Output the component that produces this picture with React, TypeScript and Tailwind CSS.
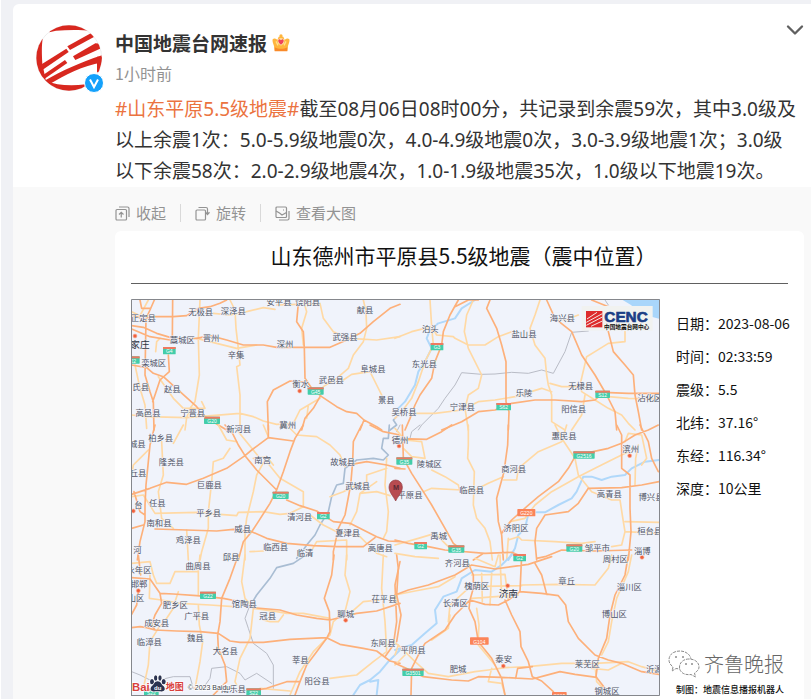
import React from 'react';
import { ChevronDown } from 'lucide-react';

type Label = [string, number, number];
type Shield = [string, number, number, number];

interface Tile {
  x: number;
  y: number;
  minor: string;
  major: string;
  river?: string;
  canal?: string;
  border?: string;
  labels: Label[];
  shields: Shield[];
  cities: [number, number][];
}

// The map is drawn in six tiles, three map units per pixel
const TILES: Tile[] = [
  {
    x: -3,
    y: -12,
    minor:
      'M5 50L30 62L55 15M210 15L205 130L208 240L195 320L180 340L170 368L165 405M300 15L315 45L318 100L325 160L330 210L320 215L330 300L330 405M200 130L260 145L320 160L380 150M250 55L300 60L350 50L400 38L435 43M440 30L500 28L570 25L580 70L610 110L660 130L740 135L810 125M520 150L515 100L530 50L520 15M700 15L708 50L710 100L700 140L670 180L655 220L620 250L580 275M640 255L665 238L720 230L740 270L760 310M5 360L50 365L170 368L330 355L370 365L400 378L440 388L490 385L510 345L570 310M535 330L530 370M15 210L30 280L45 330L50 400M85 245L130 310L160 340L225 340L215 320M77 170L80 140L90 130',
    major:
      'M5 60L40 72L70 65L130 65L170 62L205 40L240 35L270 25L290 15M73 15L60 45L48 70L45 240L60 290L70 320L72 405M30 15L35 40L60 40M128 15L127 130M5 92L40 97L80 115L130 130L200 130L240 122L290 135L340 150L400 150L440 157L600 157L650 135L690 115L730 80L780 40L810 28M5 102L60 125L120 135M505 25L500 80L520 110L523 160L525 250L545 280L575 305L620 335L650 350L680 355L702 375L740 395L755 405M5 210L50 218L70 235L100 245L150 290L200 335L225 365L265 390L290 405M115 180L118 230L90 255L75 300L68 320M520 262L480 258L430 285L412 320L415 405M570 305L550 340L525 370L515 405M702 375L690 405',
    canal: 'M805 360L790 375L800 390L780 405',
    labels: [
      ['安平县', 447, 20], ['饶阳县', 533, 20], ['无极县', 212, 50], ['深泽县', 310, 48], ['献县', 705, 44],
      ['正定县', 40, 68], ['藁城区', 157, 136], ['晋州', 243, 129], ['深州', 465, 147], ['武强县', 645, 126],
      ['辛集', 318, 180], ['栾城区', 71, 203], ['阜城县', 729, 222], ['武邑县', 604, 255], ['衡水', 512, 268],
      ['氏县', 32, 276], ['赵县', 127, 281], ['景县', 769, 314], ['高邑县', 54, 355], ['宁晋县', 188, 353],
      ['吴桥县', 822, 350], ['冀州', 473, 391], ['新河县', 326, 403], ['家庄', 30, 150],
    ],
    shields: [['G4', 118, 167, 38], ['22', 10, 195, 38], ['G45', 557, 288, 48], ['G20', 246, 376, 48]],
    cities: [[15, 123], [509, 288]],
  },
  {
    x: 792,
    y: -12,
    minor:
      'M0 130L50 110L110 95L125 120L175 125L180 130L220 150L270 150L310 125L350 110M235 15L215 60L208 110L220 160L260 240L250 280L220 300L210 340L220 405M435 15L420 60L405 100L420 150L450 190L455 240L460 270L470 300L470 380L510 405M480 70L510 75L550 60M465 265L500 275L570 275M60 355L120 355L200 345L250 320L300 315L360 305L440 280L470 290M690 110L690 140L640 145L600 170L575 185L555 270L560 290L600 315L640 340L680 360L700 385L720 405M530 405L560 360L570 300M640 305L700 310L792 312M105 15L110 95L115 150L90 200L70 260L50 310L20 350L0 370',
    major:
      'M190 15L165 60L145 110L140 150L120 200L110 250L75 300L60 330L45 370L30 405M180 35L220 15L250 15M285 15L275 40L305 100L320 150L333 200L333 320L342 350L340 405M455 15L480 70L530 110L560 180L600 240L635 300L660 350L665 405M590 15L640 35M640 110L655 170L690 210L715 240L720 300L730 350L740 405M140 405L200 380L250 350L300 345L350 325L420 315L480 315L560 320L600 315L625 292L700 295L792 295',
    river: 'M240 15L200 40L180 70L130 85L105 105L95 130L110 160L90 200L70 230L60 270L30 320L0 350',
    border: 'M580 108L530 112L510 170L475 235L440 225L400 235L350 232L300 237L260 238L200 233L180 270L150 310L130 340L80 390L70 405M630 15L640 30',
    labels: [
      ['泊头', 106, 103], ['盐山县', 387, 117], ['海兴县', 502, 70], ['东光县', 88, 208], ['无棣县', 557, 272],
      ['乐陵', 387, 295], ['宁津县', 202, 337], ['阳信县', 536, 343], ['沾化区', 764, 310],
    ],
    shields: [['G3', 126, 155, 38], ['S12', 623, 298, 44], ['S62', 326, 335, 44]],
    cities: [],
  },
  {
    x: -3,
    y: 378,
    minor:
      'M5 150L10 120L30 100L55 75M95 50L100 150L85 200L95 280L130 310M5 215L40 210L75 265L200 262L270 268L320 272L325 262L400 260L450 268L480 265L520 245L520 200L450 160L410 110M130 55L160 0M265 0L290 45L320 50M325 20L390 100M300 70L280 100L250 110L245 170L235 260L235 310L215 380L210 405M470 0L500 30L560 35L600 60L630 90L645 125M400 0L415 35M370 100L410 95L430 120M410 95L380 150L370 200L350 280L345 320L345 405M540 270L580 300L620 320L690 335L715 360M600 215L640 200L690 175L710 175L710 150L770 130M770 100L765 180L775 260L770 320L760 340M740 170L690 205L680 260L660 300M690 205L740 200L780 212M170 315L175 405M360 380L400 378M540 385L560 350L650 345L650 405M730 370L740 385L770 395',
    major:
      'M75 0L60 60L55 110L48 180L45 240L45 290L30 350L22 405M5 208L60 190L110 172L170 178L220 160L290 130L345 92L365 75L415 38L415 0M415 38L490 48M285 0L305 20L325 60L345 92L380 135L410 165L440 195M520 0L495 40L480 80L460 140L440 195L420 235L385 290L365 320L340 350L325 405M470 225L510 242L560 258L610 290L660 295L700 315L740 335L775 348L810 350M75 312L170 315L260 318L310 313L365 320L410 340L470 355L550 362L620 365L700 365L735 338M695 0L670 50L668 110L662 180L645 270L625 310L610 380L610 405M665 118L710 110L770 120L810 130M720 0L760 20L810 30M5 310L40 300M12 200L30 260L45 270',
    canal:
      'M778 0L775 40L760 40L755 70L775 90L760 105L730 100L680 105L645 130L640 175L620 180L605 215L595 260L570 300L555 330L530 360L520 375L500 400',
    labels: [
      ['柏乡县', 92, 38], ['城县', 22, 58], ['隆尧县', 124, 110], ['南宫', 398, 105], ['故城县', 638, 111],
      ['丘县', 24, 143], ['巨鹿县', 238, 179], ['武城县', 683, 183], ['任县', 82, 233], ['台', 25, 239],
      ['平乡县', 236, 263], ['清河县', 509, 275], ['南和县', 87, 294], ['威县', 338, 311], ['夏津县', 653, 323],
      ['鸡泽县', 175, 345], ['临西县', 437, 366], ['临清', 525, 384], ['高唐县', 751, 368], ['河', 22, 376],
      ['邱县', 303, 396],
    ],
    shields: [['G20', 452, 211, 48], ['G2', 580, 272, 38]],
    cities: [[10, 258]],
  },
  {
    x: 792,
    y: 378,
    minor:
      'M220 0L220 60L218 100L238 140L235 240L245 280L270 310L285 350L292 405M0 10L30 45L80 50L90 100L50 95L25 70M110 135L150 155L190 180L195 200M85 200L110 190L200 195L240 195L280 175L325 155M325 165L365 165L370 130L430 80L500 50L515 0M480 0L500 40L540 100L550 150L590 200M700 80L660 100L600 130L550 155L470 200L420 240L390 280L345 290L320 325M690 50L700 25L740 30L755 100L740 120M590 200L650 225L675 225L685 290L690 320L792 325M690 290L792 292M340 345L370 335L380 345L480 350L560 355L600 350M0 360L70 340L120 325L165 370M0 385L60 395L130 400M340 340L335 405M690 320L680 360L650 365M720 180L722 100L730 60',
    major:
      'M0 40L95 43L140 20L170 0M22 0L25 100L50 145L85 200L110 240L150 310L175 355L205 378M340 0L338 60L327 140L305 220L310 290L320 330L325 405M0 130L30 132M0 345L40 355L100 365L150 375L270 385L350 382L370 390M570 85L640 70L680 55L720 30L760 15L790 0M540 95L520 130L490 170L430 215L395 245L350 285L320 325M665 0L680 30L680 130L705 150L705 250L708 320L700 405M735 0L760 50L770 100L790 140M792 170L740 180L680 188L580 190L550 235L520 260L450 270L425 310L420 350L425 405M425 400L450 395L500 375L600 378L710 375M235 405L265 385',
    river:
      'M792 105L750 110L710 130L690 150L650 155L620 165L590 155L565 155L545 200L530 220L490 240L450 262L425 262M398 275L390 310L370 330L360 370L340 405',
    border: 'M75 0L50 20L45 40M15 0L5 20',
    labels: [
      ['惠民县', 507, 34], ['德州', 15, 45], ['滨州', 707, 73], ['陵城区', 103, 117], ['商河县', 356, 131],
      ['临邑县', 230, 196], ['高青县', 643, 207], ['博兴县', 768, 215], ['平原县', 45, 210], ['济阳区', 363, 309],
      ['桓台县', 764, 319], ['禹城', 131, 333], ['邹平市', 607, 370], ['淄博', 742, 377], ['周村区', 661, 401],
      ['齐河县', 187, 413],
    ],
    shields: [
      ['G35', 28, 108, 48], ['G2516', 567, 90, 64], ['G220', 394, 263, 54], ['G2', 77, 362, 38],
      ['G35', 184, 372, 48], ['G2', 374, 398, 38], ['G20', 538, 369, 48],
    ],
    cities: [[12, 63], [704, 92], [741, 397]],
  },
  {
    x: -3,
    y: 768,
    minor:
      'M60 60L58 130L95 135L150 145L240 150L310 155M70 60L80 85L120 85L135 50L205 50L210 0M205 50L205 120M145 110L135 140M205 150L208 210L218 260L210 320L195 400M140 145L110 190L85 220L60 260L55 330L40 400M345 0L335 80L345 130L370 160L360 250L330 310L315 380L320 390M370 160L440 170L470 175L520 175L600 190M400 195L420 200L445 200L460 180M650 0L645 60L660 110L645 170L610 200L600 240L550 290L510 350L480 420M760 0L755 100L765 200L770 290L730 320L680 360L640 365L600 370M660 175L700 140L750 135M390 400L480 408M5 25L60 20L70 60',
    major:
      'M25 0L32 60M5 68L60 72L90 115L130 117L200 122L280 130L320 138M370 158L450 165L500 180L560 190L600 195L680 175L740 168L810 145M90 115L95 145L75 180L65 210L75 225L140 228L210 230L265 235L300 258L330 262L400 262L480 253L590 248L630 268L700 280L740 288L780 318L810 325M325 0L300 70L275 130L270 200L263 240L265 280L285 330L290 380L270 400L250 420M5 218L30 215L50 218L75 225M612 0L605 60L583 130L598 170L600 230L590 250L560 290L530 330L510 380L495 420M380 405L410 400L470 380L510 380M765 305L790 270L800 200L795 90L810 20M25 110L20 150L5 178',
    canal: 'M520 5L490 25L440 38L420 70L380 120L365 145',
    river: 'M810 285L775 320L750 350L720 375L690 390L670 420M740 420L745 375L720 380',
    border:
      'M5 350L30 360L60 375M100 372L130 365L180 365L190 400M215 405L240 370L245 340L290 335L330 355L345 375L380 355L425 385M430 400V330L410 295L370 265L355 220L345 190L360 150',
    labels: [
      ['曲周县', 204, 33], ['永年区', 27, 45], ['邯郸', 27, 87], ['茌平县', 762, 131], ['山区', 18, 130],
      ['肥乡区', 136, 149], ['馆陶县', 343, 148], ['广平县', 200, 183], ['冠县', 413, 183], ['聊城', 647, 177],
      ['成安县', 80, 205], ['魏县', 196, 248], ['临漳县', 58, 262], ['东阿县', 759, 263], ['大名县', 286, 289],
      ['莘县', 511, 316], ['阳谷县', 561, 379], ['南乐县', 310, 403],
    ],
    shields: [['G22', 234, 121, 48], ['S22', 64, 412, 44], ['S22', 371, 411, 44]],
    cities: [[25, 107], [647, 196]],
  },
  {
    x: 792,
    y: 768,
    minor:
      'M0 120L60 108L130 95L180 65M230 60L330 58L340 135M235 95L380 92M260 55L262 140M290 55L285 150M380 90L490 88L600 90L640 40L650 0M230 130L370 120M240 10L300 35L310 0M165 180L160 220L110 255M10 270L60 320L100 355L160 365L240 350L280 345L330 338L400 335L500 325L600 325L700 320L740 335L792 350M0 265L10 270L0 300M220 100L165 150L160 200M245 160L252 210L250 250M250 270L300 330M290 340L280 380L320 385L330 420M710 0L700 50L665 130L650 200L640 260L620 300M600 330L605 380L625 400M590 340L640 345L680 325M315 0L320 130M30 300L0 330',
    major:
      'M0 120L40 105L100 90L180 60L230 30L300 42L400 28L470 5M220 25L235 60L235 100L225 135L222 160L240 200L250 260L290 310L320 370L330 420M225 135L270 148L310 150L340 135L375 110L380 0M375 110L440 115L490 122L512 150L520 200L550 250L600 300L640 315L680 325L740 350L792 358M330 135L350 180L375 230L378 275L400 320L412 365L440 378L475 410M420 25L440 60L455 118M700 0L690 60L660 120L645 180L635 250L610 310L603 365L630 400M0 325L45 345L85 365L170 375L220 378L250 365L320 367L412 372L450 362L495 350L540 358L605 367M48 420L50 340L70 300L90 265L150 225L180 180L225 135M5 0L10 40L5 120L18 180L5 260M362 370L368 340L412 335',
    river: 'M350 0L320 30L290 50L240 45L200 70L185 110L145 125L120 165L125 205L90 235L50 270L0 285',
    labels: [
      ['槐荫区', 245, 93], ['济南', 340, 118], ['长清区', 181, 145], ['章丘', 515, 79], ['淄川区', 703, 97],
      ['博山区', 658, 176], ['平阴县', 54, 286], ['泰安', 326, 313], ['肥城', 189, 343], ['莱芜区', 577, 326],
      ['沂源', 778, 342], ['钢城区', 636, 408],
    ],
    shields: [['G104', 253, 258, 56], ['G3501', 54, 352, 64], ['G205', 493, 422, 44]],
    cities: [[338, 92], [325, 333]],
  },
];

// City names set a step larger than the counties
const LARGE = ['家庄', '济南'];
const NATIONAL = ['G220', 'G104', 'G205'];

const DETAILS = [
  { label: '日期：', value: '2023-08-06' },
  { label: '时间：', value: '02:33:59' },
  { label: '震级：', value: '5.5' },
  { label: '北纬：', value: '37.16°' },
  { label: '东经：', value: '116.34°' },
  { label: '深度：', value: '10公里' },
];

const MapTile: React.FC<{ tile: Tile }> = ({ tile }) => (
  <g transform={`translate(${tile.x} ${tile.y})`}>
    <g fill="none" strokeLinejoin="round" strokeLinecap="round">
      {tile.border && <path d={tile.border} stroke="#b9bcc6" strokeWidth="3" />}
      {tile.canal && <path d={tile.canal} stroke="#a9bdd3" strokeWidth="5" />}
      {tile.river && <path d={tile.river} stroke="#b0d8fa" strokeWidth="6" />}
      <path d={tile.minor} stroke="#ffd9a4" strokeWidth="5" />
      <path d={tile.major} stroke="#fdb07a" strokeWidth="5" />
    </g>
  </g>
);

const TileText: React.FC<{ tile: Tile }> = ({ tile }) => (
  <g transform={`translate(${tile.x} ${tile.y})`} textAnchor="middle">
    {tile.cities.map(([cx, cy]) => (
      <circle key={cx} cx={cx} cy={cy} r="6" fill="#f0603c" stroke="#f8b7a2" strokeWidth="2" />
    ))}
    {tile.shields.map(([name, cx, cy, w]) => (
      <g key={name + cx}>
        <rect x={cx - w / 2} y={cy - 11} width={w} height="22" rx="2" fill={NATIONAL.includes(name) ? '#fb8459' : '#43cda9'} />
        {!NATIONAL.includes(name) && <rect x={cx - w / 2} y={cy - 11} width={w} height="6" fill="#ee7a61" />}
        <text x={cx} y={cy + 8} fontSize="15" fill="#ffffff">{name}</text>
      </g>
    ))}
    {tile.labels.map(([name, cx, cy]) => (
      <text
        key={name}
        x={cx}
        y={cy + 9}
        fontSize={LARGE.includes(name) ? 29 : 25}
        fill={LARGE.includes(name) ? '#2f3340' : '#505566'}
        stroke="#f0f3fb"
        strokeWidth="3"
        paintOrder="stroke"
      >
        {name}
      </text>
    ))}
  </g>
);

const EpicenterMap: React.FC = () => (
  <svg
    viewBox="0 0 1587 1191"
    role="img"
    aria-label="震中位置"
    className="block h-auto w-full font-['Liberation_Sans','Noto_Sans_CJK_SC',sans-serif]"
  >
    <rect width="1587" height="1191" fill="#f0f3fb" />
    <path d="M1470 0L1500 18L1530 45L1587 60V0Z" fill="#a9d6fb" />
    {TILES.map((tile, i) => <MapTile key={i} tile={tile} />)}
    {TILES.map((tile, i) => <TileText key={i} tile={tile} />)}

    {/* Epicentre pin */}
    <path d="M794 606C786 590 774 580 774 564A20 21 0 0 1 814 564C814 580 802 590 794 606Z" fill="#b84b50" stroke="#8f3a40" strokeWidth="2" />
    <text x="795" y="573" fontSize="22" fontWeight="bold" textAnchor="middle" fill="#5a2a35">M</text>

    {/* CENC badge */}
    <rect x="1352" y="21" width="213" height="74" fill="#f1f2f0" />
    <rect x="1365" y="36" width="49" height="49" fill="#dd2b2b" />
    <path d="M1368 60L1398 40M1366 70L1414 44M1366 79L1414 54M1380 82L1414 66" stroke="#f6e9e6" strokeWidth="3" />
    <text x="1420" y="68" fontSize="46" fontWeight="bold" fill="#1c3f86" stroke="#1c3f86" strokeWidth="2">CENC</text>
    <text x="1419" y="89" fontSize="17" fontWeight="bold" fill="#111111">中国地震台网中心</text>

    {/* Map provider */}
    <g stroke="#ffffff" strokeWidth="4" paintOrder="stroke">
      <text x="3" y="1175" fontSize="34" fontWeight="bold" fill="#d8403c">Bai</text>
      <g fill="#2b3350">
        <ellipse cx="63" cy="1148" rx="6" ry="8" />
        <ellipse cx="74" cy="1137" rx="5" ry="8" />
        <ellipse cx="87" cy="1137" rx="5" ry="8" />
        <ellipse cx="98" cy="1148" rx="6" ry="8" />
        <path d="M80 1147C90 1147 90 1156 98 1162C106 1172 98 1180 88 1177L72 1177C62 1180 54 1172 62 1162C70 1156 70 1147 80 1147Z" />
      </g>
      <text x="80" y="1174" fontSize="18" fontWeight="bold" textAnchor="middle" fill="#ffffff" stroke="none">du</text>
      <text x="104" y="1174" fontSize="27" fontWeight="bold" fill="#d8403c">地图</text>
      <text x="170" y="1172" fontSize="21" fill="#3c3f4a">© 2023 Baidu</text>
    </g>
    <path d="M1.500 1191V1.500H1585.500V1189.500H1.500" fill="none" stroke="#85878c" strokeWidth="3" />
  </svg>
);

const Avatar: React.FC = () => (
  <div className="relative h-[66px] w-[66px] shrink-0">
    <svg viewBox="0 0 198 198" className="h-full w-full" aria-hidden="true">
      <defs>
        <clipPath id="avatar-clip">
          <circle cx="99" cy="99" r="98" />
        </clipPath>
      </defs>
      <circle cx="99" cy="99" r="98" fill="#ffffff" stroke="#e6e6e6" strokeWidth="2" />
      <g clipPath="url(#avatar-clip)" fill="#d8281f">
        {/* Rim */}
        <path d="M40 22L60 17C95 14 130 14 172 17L165 -5H40Z" />
        <path d="M-5 40L20 42C17 60 17 82 19 116L30 168L0 175Z" />
        <path d="M30 168C60 180 100 184 150 178L165 200H15Z" />
        <path d="M183 95H200V142H183Z" />
        {/* Bars */}
        <path d="M18 117L91 71L98 81L19 135Z" />
        <path d="M18 152L87 105L94 114L28 160Z" />
        <path d="M94 64L167 23L175 35L102 75Z" />
        <path d="M111 94L178 55L195 56L192 71L118 105Z" />
        <path d="M28 166C80 136 130 113 200 90V112C140 122 90 148 40 178Z" />
      </g>
    </svg>
    <svg viewBox="0 0 20 20" className="absolute -right-[2px] -bottom-[2px] h-5 w-5" aria-hidden="true">
      <circle cx="10" cy="10" r="9.500" fill="#14a1fb" stroke="#ffffff" />
      <path d="M6 6.500L10 14L14 6.500" fill="none" stroke="#ffffff" strokeWidth="2" />
    </svg>
  </div>
);

const Crown: React.FC = () => (
  <svg viewBox="0 0 54 54" className="h-[18px] w-[18px]" aria-hidden="true">
    <path d="M2 16C6 12 12 14 16 18L20 8H34L38 18C42 14 48 12 52 16C54 22 50 30 48 36L46 50H8L6 36C4 30 0 22 2 16Z" fill="#ffb53d" />
    <path d="M8 40C20 46 34 46 46 40V52H8Z" fill="#f98a2a" />
    <circle cx="27" cy="6" r="5" fill="#ffb53d" />
    <path d="M12 22L18 34M42 22L36 34" stroke="#ffe08a" strokeWidth="4" />
    <path d="M16 16L27 12L38 16L36 28L27 35L18 28Z" fill="#ffe0a0" />
    <path d="M27 32C17 26 17 16 23 16L27 19L31 16C37 16 37 26 27 32Z" fill="#f0435b" />
  </svg>
);

const iconClass = 'h-[15px] w-[15px]';

const CollapseIcon = () => (
  <svg viewBox="0 0 15 15" className={iconClass} fill="none" stroke="currentColor" strokeWidth="1.200" aria-hidden="true">
    <rect x="1" y="3.500" width="10.500" height="10.500" rx="1" />
    <path d="M4 1H12.500Q14 1 14 2.500V11M6.250 11.500V6.500M4 8.500L6.250 6.250L8.500 8.500" />
  </svg>
);

const RotateIcon = () => (
  <svg viewBox="0 0 15 15" className={iconClass} fill="none" stroke="currentColor" strokeWidth="1.200" aria-hidden="true">
    <rect x="1" y="4" width="9.500" height="10" rx="1" />
    <path d="M3.500 1.500H11Q12.500 1.500 12.500 3V8M10.500 6.250L12.500 8.500L14.500 6.250" />
  </svg>
);

const ViewIcon = () => (
  <svg viewBox="0 0 15 15" className={iconClass} fill="none" stroke="currentColor" strokeWidth="1.200" aria-hidden="true">
    <rect x="1" y="1" width="10.500" height="10.500" rx="1" />
    <path d="M1 5L4.500 7L7 9L11.500 6.500M8 4H9M4 14H12.500Q14 14 14 12.500V5" />
  </svg>
);

const ACTIONS = [
  { name: '收起', Icon: CollapseIcon },
  { name: '旋转', Icon: RotateIcon },
  { name: '查看大图', Icon: ViewIcon },
];

const WechatMark = () => (
  <svg viewBox="0 0 32 28" className="h-7 w-8" fill="#ffffff" stroke="#8b8b8b" strokeWidth="1" strokeDasharray="3 1" aria-hidden="true">
    <path d="M12 1C5 1 1 5 1 10C1 13 3 15.500 5 17L4 21L8 18.500C16 20 23 16 23 10C23 5 18 1 12 1Z" />
    <path d="M21 9C15 9 11.500 13 11.500 17C11.500 22 16 25.500 23 24.500L27.500 27L26.500 23C29 21.500 31 19.500 31 17C31 12.500 27 9 21 9Z" />
    <path d="M7 7H9M14 7H16M17 14H19M23 14H25" stroke="#555555" strokeDasharray="none" />
  </svg>
);

const App: React.FC = () => {
  return (
    <div className="min-h-screen border-l border-white bg-[#f0f1f5] pt-1 pl-3 font-['Noto_Sans_CJK_SC',sans-serif]">
      <article className="overflow-hidden rounded-tl-md bg-white">
        {/* Author and text */}
        <div className="flex gap-[13px] pt-[21px] pl-[23px]">
          <Avatar />
          <div className="min-w-0 flex-1">
            <header className="flex justify-between pt-[3px] pr-[2px]">
              <div>
                <h1 className="flex items-center gap-[5px] text-[19px] leading-[30px] font-bold text-[#333333]">
                  中国地震台网速报
                  <Crown />
                </h1>
                <p className="text-base leading-[31px] text-[#939393]">1小时前</p>
              </div>
              <button type="button" aria-label="更多" className="-mt-3 h-7 w-7 self-start text-[#606060]">
                <ChevronDown size={28} strokeWidth={2} />
              </button>
            </header>
            <p className="pt-[5px] pr-[10px] font-['Noto_Sans','Noto_Sans_CJK_SC',sans-serif] text-[19px] leading-[31px] text-[#333333]">
              <a href="#topic" className="text-[#eb7340]">#山东平原5.5级地震#</a>
              截至08月06日08时00分，共记录到余震59次，其中3.0级及以上余震1次：5.0-5.9级地震0次，4.0-4.9级地震0次，3.0-3.9级地震1次；3.0级以下余震58次：2.0-2.9级地震4次，1.0-1.9级地震35次，1.0级以下地震19次。
            </p>
          </div>
        </div>

        {/* Expanded picture */}
        <div className="bg-[#f9f9f9] pr-[7px] pl-[102px]">
          <div className="flex h-11 items-center pt-2 text-[15px] text-[#939393]">
            {ACTIONS.map(({ name, Icon }, i) => (
              <React.Fragment key={name}>
                {i > 0 && <span className="mx-[14px] h-[18px] w-px bg-[#d9d9d9]" />}
                <button type="button" className="flex items-center gap-[6px]">
                  <Icon />
                  {name}
                </button>
              </React.Fragment>
            ))}
          </div>

          <figure className="relative rounded-t-md bg-white px-4 pb-1">
            <h2 className="border-b border-[#606060] pt-2 pb-3 pl-2 text-center text-[21px] leading-8 text-[#111111]">
              山东德州市平原县5.5级地震（震中位置）
            </h2>
            <div className="flex gap-4 pt-[15px]">
              <div className="min-w-0 flex-1">
                <EpicenterMap />
              </div>
              <div className="flex w-28 shrink-0 flex-col justify-between whitespace-nowrap text-[#111111]">
                <dl className="pt-2 text-[14px] leading-[33px]">
                  {DETAILS.map((row) => (
                    <div key={row.label} className="flex">
                      <dt>{row.label}</dt>
                      <dd>{row.value}</dd>
                    </div>
                  ))}
                </dl>
                <figcaption className="text-[9px] leading-3 font-medium">制图：地震信息播报机器人</figcaption>
              </div>
            </div>
            <div className="absolute right-5 bottom-5 flex items-center gap-1">
              <WechatMark />
              <span className="text-[20px] leading-8 font-light text-[#666666]">齐鲁晚报</span>
            </div>
          </figure>
        </div>
      </article>
    </div>
  );
};

export default App;
